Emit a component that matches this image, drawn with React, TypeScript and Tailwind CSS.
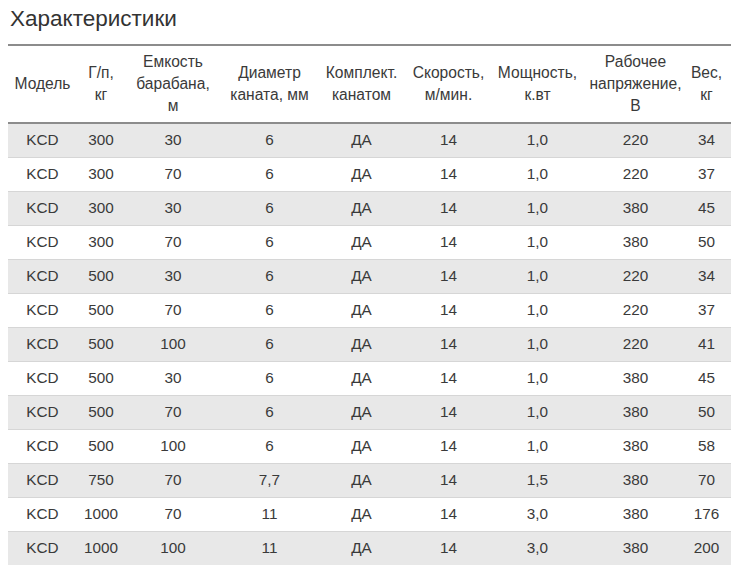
const rows = [
  ['KCD', '300', '30', '6', 'ДА', '14', '1,0', '220', '34'],
  ['KCD', '300', '70', '6', 'ДА', '14', '1,0', '220', '37'],
  ['KCD', '300', '30', '6', 'ДА', '14', '1,0', '380', '45'],
  ['KCD', '300', '70', '6', 'ДА', '14', '1,0', '380', '50'],
  ['KCD', '500', '30', '6', 'ДА', '14', '1,0', '220', '34'],
  ['KCD', '500', '70', '6', 'ДА', '14', '1,0', '220', '37'],
  ['KCD', '500', '100', '6', 'ДА', '14', '1,0', '220', '41'],
  ['KCD', '500', '30', '6', 'ДА', '14', '1,0', '380', '45'],
  ['KCD', '500', '70', '6', 'ДА', '14', '1,0', '380', '50'],
  ['KCD', '500', '100', '6', 'ДА', '14', '1,0', '380', '58'],
  ['KCD', '750', '70', '7,7', 'ДА', '14', '1,5', '380', '70'],
  ['KCD', '1000', '70', '11', 'ДА', '14', '3,0', '380', '176'],
  ['KCD', '1000', '100', '11', 'ДА', '14', '3,0', '380', '200'],
];

const headers = [
  ['Модель'],
  ['Г/п,', 'кг'],
  ['Емкость', 'барабана,', 'м'],
  ['Диаметр', 'каната, мм'],
  ['Комплект.', 'канатом'],
  ['Скорость,', 'м/мин.'],
  ['Мощность,', 'к.вт'],
  ['Рабочее', 'напряжение,', 'В'],
  ['Вес,', 'кг'],
];

const widths = ['w-[69px]', 'w-[48px]', 'w-[96px]', 'w-[97px]', 'w-[87px]', 'w-[87px]', 'w-[91px]', 'w-[105px]', 'w-[43px]'];

export default function App() {
  return (
    <div className="bg-white w-[731px] h-[570px] overflow-hidden font-['Liberation_Sans',Arial,sans-serif] text-[#333]">
      {/* Title */}
      <h2 className="pl-[10px] pt-[7px] text-[22.5px] leading-[24px] font-normal text-[#333]">Характеристики</h2>

      {/* Table */}
      <table className="ml-[8px] mt-[13px] w-[723px] table-fixed border-collapse text-[15.3px]">
        <colgroup>
          {widths.map((w, i) => (
            <col key={i} className={w} />
          ))}
        </colgroup>
        <thead>
          <tr className="border-t-2 border-b-2 border-[#8c8c8c]">
            {headers.map((h, i) => (
              <th
                key={i}
                className={`py-[5px] text-[15.6px] font-normal leading-[22px] text-center align-middle text-[#3a3a3a] ${
                  i === 8 ? 'pl-0 pr-[6px]' : 'px-0'
                }`}
              >
                {h.map((line, j) => (
                  <div key={j} className="whitespace-nowrap">{line}</div>
                ))}
              </th>
            ))}
          </tr>
        </thead>
        <tbody>
          {rows.map((r, i) => (
            <tr
              key={i}
              className={`h-[34px] border-t border-[#d6d6d6] ${i % 2 === 0 ? 'bg-[#e8e8e8]' : 'bg-white'}`}
            >
              {r.map((c, j) => (
                <td
                  key={j}
                  className={`text-center align-middle leading-[22px] py-0 text-[#3a3a3a] ${j === 8 ? 'pl-0 pr-[6px]' : 'px-0'}`}
                >
                  {c}
                </td>
              ))}
            </tr>
          ))}
        </tbody>
      </table>
    </div>
  );
}
